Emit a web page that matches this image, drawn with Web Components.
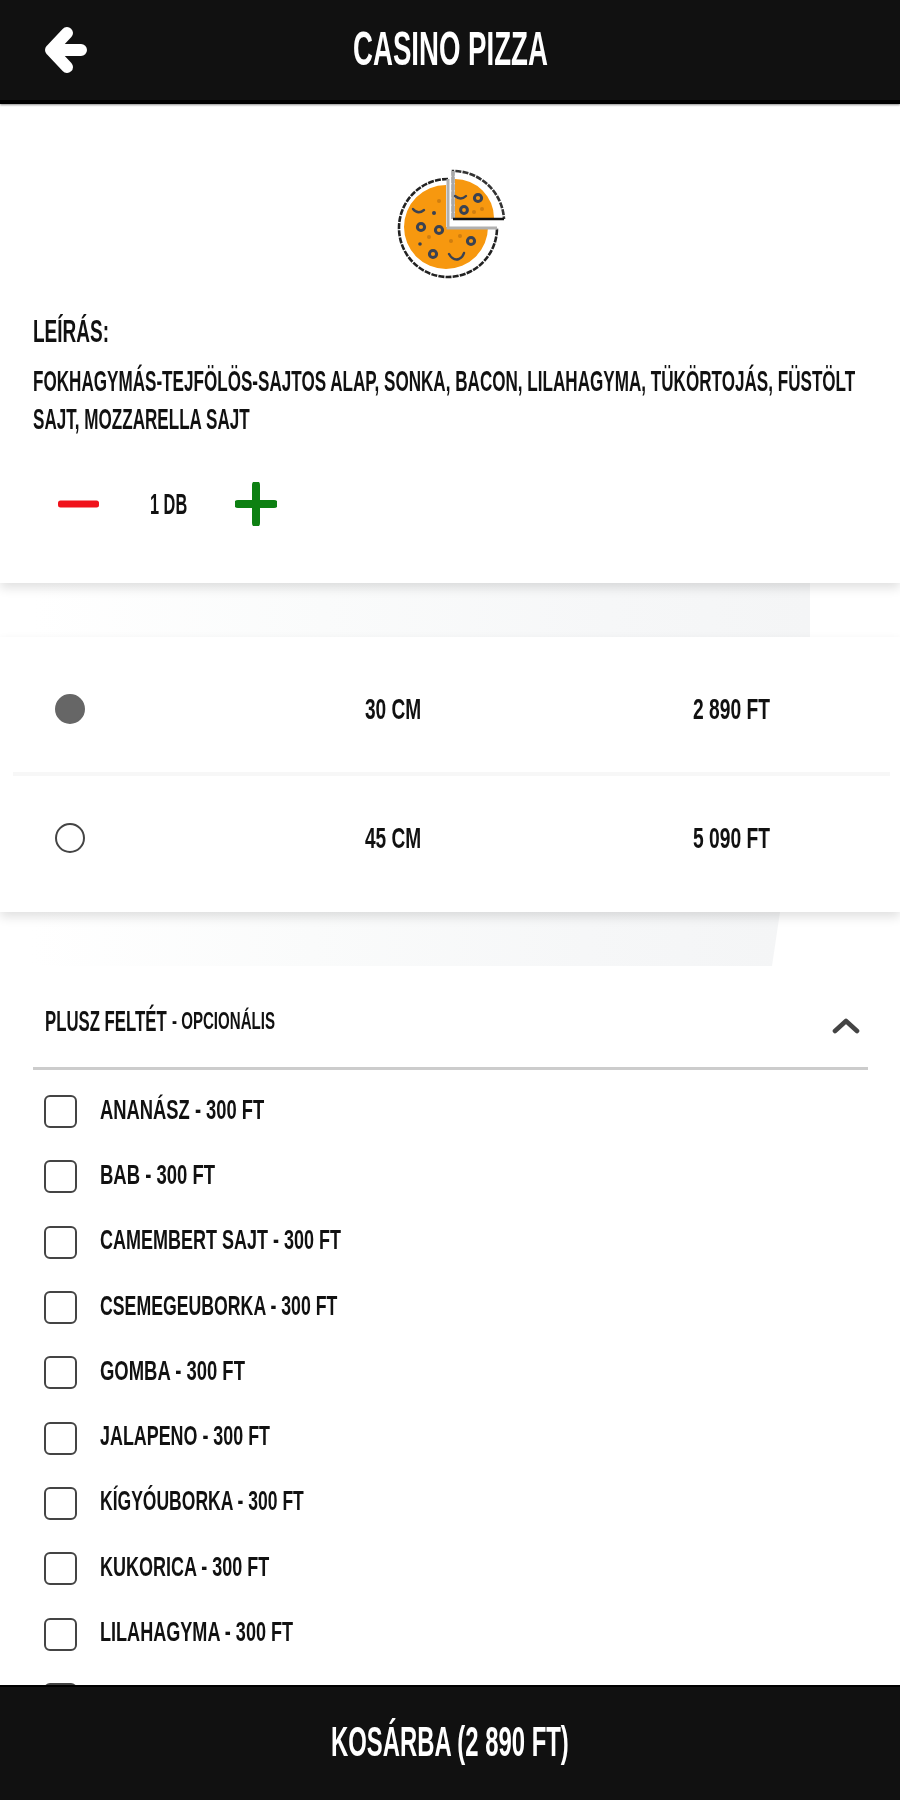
<!DOCTYPE html>
<html lang="hu">
<head>
<meta charset="utf-8">
<title>Casino Pizza</title>
<style>
  html, body { margin: 0; padding: 0; background: #fff; }
  body { width: 900px; height: 1800px; overflow: hidden; font-family: "Liberation Sans Narrow", "Liberation Sans", sans-serif; color: #111; }
</style>
</head>
<body>
<pizza-page>
  <app-bar slot="top"><cond-text w="195" size="49" bold>CASINO PIZZA</cond-text></app-bar>

  <product-card>
    <cond-text slot="label" w="76" size="31" bold>LEÍRÁS:</cond-text>
    <cond-text slot="desc" w="822" size="30" bold>FOKHAGYMÁS-TEJFÖLÖS-SAJTOS ALAP, SONKA, BACON, LILAHAGYMA, TÜKÖRTOJÁS, FÜSTÖLT</cond-text>
    <cond-text slot="desc" w="217" size="30" bold>SAJT, MOZZARELLA SAJT</cond-text>
    <qty-stepper><cond-text w="37" size="30" bold>1 DB</cond-text></qty-stepper>
  </product-card>

  <fade-band end="810"></fade-band>

  <size-card>
    <size-row checked><cond-text slot="size" w="56" size="30" bold>30 CM</cond-text><cond-text slot="price" w="77" size="30" bold>2 890 FT</cond-text></size-row>
    <size-row><cond-text slot="size" w="56" size="30" bold>45 CM</cond-text><cond-text slot="price" w="77" size="30" bold>5 090 FT</cond-text></size-row>
  </size-card>

  <fade-band end="780" slant></fade-band>

  <extra-section>
    <cond-text slot="title" w="122" size="29" bold>PLUSZ FELTÉT</cond-text>
    <cond-text slot="note" w="103" size="24" bold>- OPCIONÁLIS</cond-text>
    <extra-item><cond-text w="164" size="28" bold>ANANÁSZ - 300 FT</cond-text></extra-item>
    <extra-item><cond-text w="115" size="28" bold>BAB - 300 FT</cond-text></extra-item>
    <extra-item><cond-text w="241" size="28" bold>CAMEMBERT SAJT - 300 FT</cond-text></extra-item>
    <extra-item><cond-text w="237" size="28" bold>CSEMEGEUBORKA - 300 FT</cond-text></extra-item>
    <extra-item><cond-text w="145" size="28" bold>GOMBA - 300 FT</cond-text></extra-item>
    <extra-item><cond-text w="170" size="28" bold>JALAPENO - 300 FT</cond-text></extra-item>
    <extra-item><cond-text w="204" size="28" bold>KÍGYÓUBORKA - 300 FT</cond-text></extra-item>
    <extra-item><cond-text w="169" size="28" bold>KUKORICA - 300 FT</cond-text></extra-item>
    <extra-item><cond-text w="193" size="28" bold>LILAHAGYMA - 300 FT</cond-text></extra-item>
    <extra-item></extra-item>
  </extra-section>

  <cart-bar slot="bottom"><cond-text w="238" size="42" bold>KOSÁRBA (2 890 FT)</cond-text></cart-bar>
</pizza-page>

<script>
function make(name, html) {
  customElements.define(name, class extends HTMLElement {
    constructor() { super(); this.attachShadow({ mode: 'open' }).innerHTML = html; }
  });
}

make('pizza-page', `
  <style>
    :host { display: flex; flex-direction: column; width: 900px; height: 1800px; overflow: hidden; background: #fff; }
    main { flex: 1; min-height: 0; overflow: hidden; display: block; }
  </style>
  <slot name="top"></slot>
  <main><slot></slot></main>
  <slot name="bottom"></slot>`);

make('app-bar', `
  <style>
    :host { display: block; position: relative; z-index: 3; background: #111; border-bottom: 4px solid #000; box-shadow: 0 1px 2px rgba(0,0,0,.45); color: #fff; }
    .bar { height: 100px; display: grid; grid-template-columns: 1fr auto 1fr; align-items: center; }
    svg { display: block; margin-left: 44px; filter: blur(.6px); }
    .t { margin-top: -4px; }
  </style>
  <div class="bar">
    <svg width="44" height="46" viewBox="0 0 44 46" aria-hidden="true"><path d="M23 6 7 23l16 17M7 23h30" fill="none" stroke="#fff" stroke-width="12" stroke-linejoin="round" stroke-linecap="round"/></svg>
    <div class="t"><slot></slot></div>
    <span></span>
  </div>`);

make('product-card', `
  <style>
    :host { display: block; position: relative; z-index: 2; background: #fff; box-shadow: 0 5px 10px rgba(0,0,0,.12); padding: 64px 33px 57px; height: 479px; box-sizing: border-box; }
    svg { display: block; margin: 0 auto 33px; filter: blur(.5px); }
    .l { height: 38px; }
    .d { margin-top: 11px; display: flex; flex-direction: column; align-items: flex-start; }
    .q { margin-top: 44px; }
  </style>
  <svg width="120" height="112" viewBox="390 168 120 112" aria-hidden="true" style="transform:translateX(-1px)">
    <path d="M447 227V185A42 42 0 1 0 489 227Z" fill="#f7980f"/>
    <path d="M456 218V179A39 39 0 0 1 495 218Z" fill="#f7980f"/>
    <path d="M449 179A49 49 0 1 0 498 228" fill="none" stroke="#222" stroke-width="2.6" stroke-dasharray="6 1.2"/>
    <path d="M449 179V228H498" fill="none" stroke="#b0b0b0" stroke-width="3"/>
    <path d="M454 219V171A51 51 0 0 1 505 219" fill="none" stroke="#333" stroke-width="2.6" stroke-dasharray="6 1.2"/>
    <path d="M454 171V219" stroke="#a8a8a8" stroke-width="3"/>
    <path d="M454 219H505" stroke="#111" stroke-width="2.6"/>
    <g fill="#f7980f" stroke="#3a4252" stroke-width="3">
      <circle cx="422" cy="227" r="3.6"/><circle cx="440" cy="230" r="3.6"/><circle cx="434" cy="254" r="3.6"/>
      <circle cx="472" cy="241" r="3.6"/><circle cx="465" cy="210" r="3.4"/><circle cx="479" cy="198" r="3.6"/>
    </g>
    <g fill="#3a4252"><circle cx="435" cy="213" r="2"/><circle cx="421" cy="244" r="1.8"/></g>
    <g fill="none" stroke="#3a4252" stroke-width="2.4" stroke-linecap="round">
      <path d="M414 209q5 6 11 1"/><path d="M456 196q6 5 11 0"/><path d="M450 254q4 7 10 5 4-2 5-6"/>
    </g>
    <g fill="#cf7e10"><circle cx="430" cy="237" r="2"/><circle cx="452" cy="241" r="2"/><circle cx="461" cy="236" r="2"/><circle cx="475" cy="212" r="2"/><circle cx="483" cy="209" r="2"/><circle cx="440" cy="201" r="2"/></g>
  </svg>
  <div class="l"><slot name="label"></slot></div>
  <div class="d"><slot name="desc"></slot></div>
  <div class="q"><slot></slot></div>`);

make('qty-stepper', `
  <style>
    :host { display: flex; align-items: center; height: 44px; padding-left: 25px; }
    svg { display: block; flex: none; filter: blur(.6px); }
    .a { margin-right: 51px; } .b { margin-left: 48px; }
  </style>
  <svg class="a" width="41" height="8" viewBox="0 0 41 8" aria-hidden="true"><rect x="0" y="0.5" width="41" height="7" rx="2.5" fill="#f0121b"/></svg>
  <slot></slot>
  <svg class="b" width="42" height="44" viewBox="0 0 42 44" aria-hidden="true"><path d="M21 3v38M3 22h36" stroke="#0d8012" stroke-width="8" stroke-linecap="round"/></svg>`);

customElements.define('fade-band', class extends HTMLElement {
  constructor() {
    super();
    this.attachShadow({ mode: 'open' }).innerHTML = `
      <style>
        :host { display: block; height: 54px; background: #fff; }
        div { height: 100%; background: linear-gradient(90deg, #fff 4%, #fafbfb 40%, #f6f7f8 75%, #f4f5f6 100%); }
      </style><div></div>`;
  }
  connectedCallback() {
    const d = this.shadowRoot.querySelector('div');
    d.style.width = this.getAttribute('end') + 'px';
    if (this.hasAttribute('slant')) d.style.clipPath = 'polygon(0 0,100% 0,calc(100% - 8px) 100%,0 100%)';
  }
});

make('size-card', `
  <style>
    :host { display: block; position: relative; z-index: 2; background: #fff; box-shadow: 0 5px 10px rgba(0,0,0,.12); padding: 10px 0 13px; height: 275px; box-sizing: border-box; }
  </style>
  <slot></slot>`);

customElements.define('size-row', class extends HTMLElement {
  constructor() {
    super();
    this.attachShadow({ mode: 'open' }).innerHTML = `
      <style>
        :host { display: grid; grid-template-columns: 310px 328px 1fr; align-items: center; height: 122px; padding-left: 55px; }
        :host([checked]) { height: 124px; margin-bottom: 6px; position: relative; }
        :host([checked])::after { content: ""; position: absolute; left: 13px; right: 10px; bottom: -5px; height: 4px; background: #f7f7f7; }
        .r { width: 30px; height: 30px; box-sizing: border-box; border-radius: 50%; border: 2.5px solid #444; background: #fff; filter: blur(.6px); }
        :host([checked]) .r { background: #666; border-color: #666; }
      </style>
      <div class="r"></div>
      <div><slot name="size"></slot></div>
      <div><slot name="price"></slot></div>`;
  }
});

make('extra-section', `
  <style>
    :host { display: block; padding: 0 32px 0 33px; background: #fff; }
    .h { display: flex; align-items: center; gap: 5px; height: 40px; padding: 35px 7px 26px 12px; border-bottom: 3px solid #ccc; }
    svg { margin-left: auto; margin-top: 10px; display: block; filter: blur(.6px); }
    .l { padding-top: 9px; }
  </style>
  <div class="h">
    <slot name="title"></slot><slot name="note"></slot>
    <svg width="30" height="18" viewBox="0 0 30 18" aria-hidden="true"><path d="M4 14 15 4l11 10" fill="none" stroke="#444" stroke-width="4.6" stroke-linecap="round" stroke-linejoin="round"/></svg>
  </div>
  <div class="l"><slot></slot></div>`);

make('extra-item', `
  <style>
    :host { display: flex; align-items: center; height: 65.3px; padding-left: 11px; gap: 23px; }
    .c { width: 33px; height: 33px; flex: none; box-sizing: border-box; border: 2.5px solid #444; border-radius: 6px; background: #fff; filter: blur(.5px); }
    .t { margin-top: -4px; }
  </style>
  <div class="c"></div><div class="t"><slot></slot></div>`);

make('cart-bar', `
  <style>
    :host { display: flex; position: relative; z-index: 3; justify-content: center; align-items: center; height: 115px; box-sizing: border-box; background: #111; border-top: 2px solid #000; color: #fff; }
    div { margin-top: -3px; }
  </style>
  <div><slot></slot></div>`);

customElements.define('cond-text', class extends HTMLElement {
  constructor() {
    super();
    this.attachShadow({ mode: 'open' }).innerHTML = `
      <style>
        :host { display: inline-block; vertical-align: top; font-family: "Liberation Sans Narrow", "Liberation Sans", sans-serif; line-height: 38px; white-space: nowrap; filter: blur(.5px); }
        span { display: inline-block; transform-origin: 0 50%; }
      </style><span><slot></slot></span>`;
  }
  connectedCallback() {
    this.style.fontSize = this.getAttribute('size') + 'px';
    this.style.fontWeight = this.hasAttribute('bold') ? '700' : '400';
    const w = +this.getAttribute('w');
    this.style.width = w + 'px';
    const s = this.shadowRoot.querySelector('span');
    const natural = s.offsetWidth;
    if (natural) s.style.transform = 'scaleX(' + (w / natural) + ')';
  }
});
</script>
</body>
</html>
